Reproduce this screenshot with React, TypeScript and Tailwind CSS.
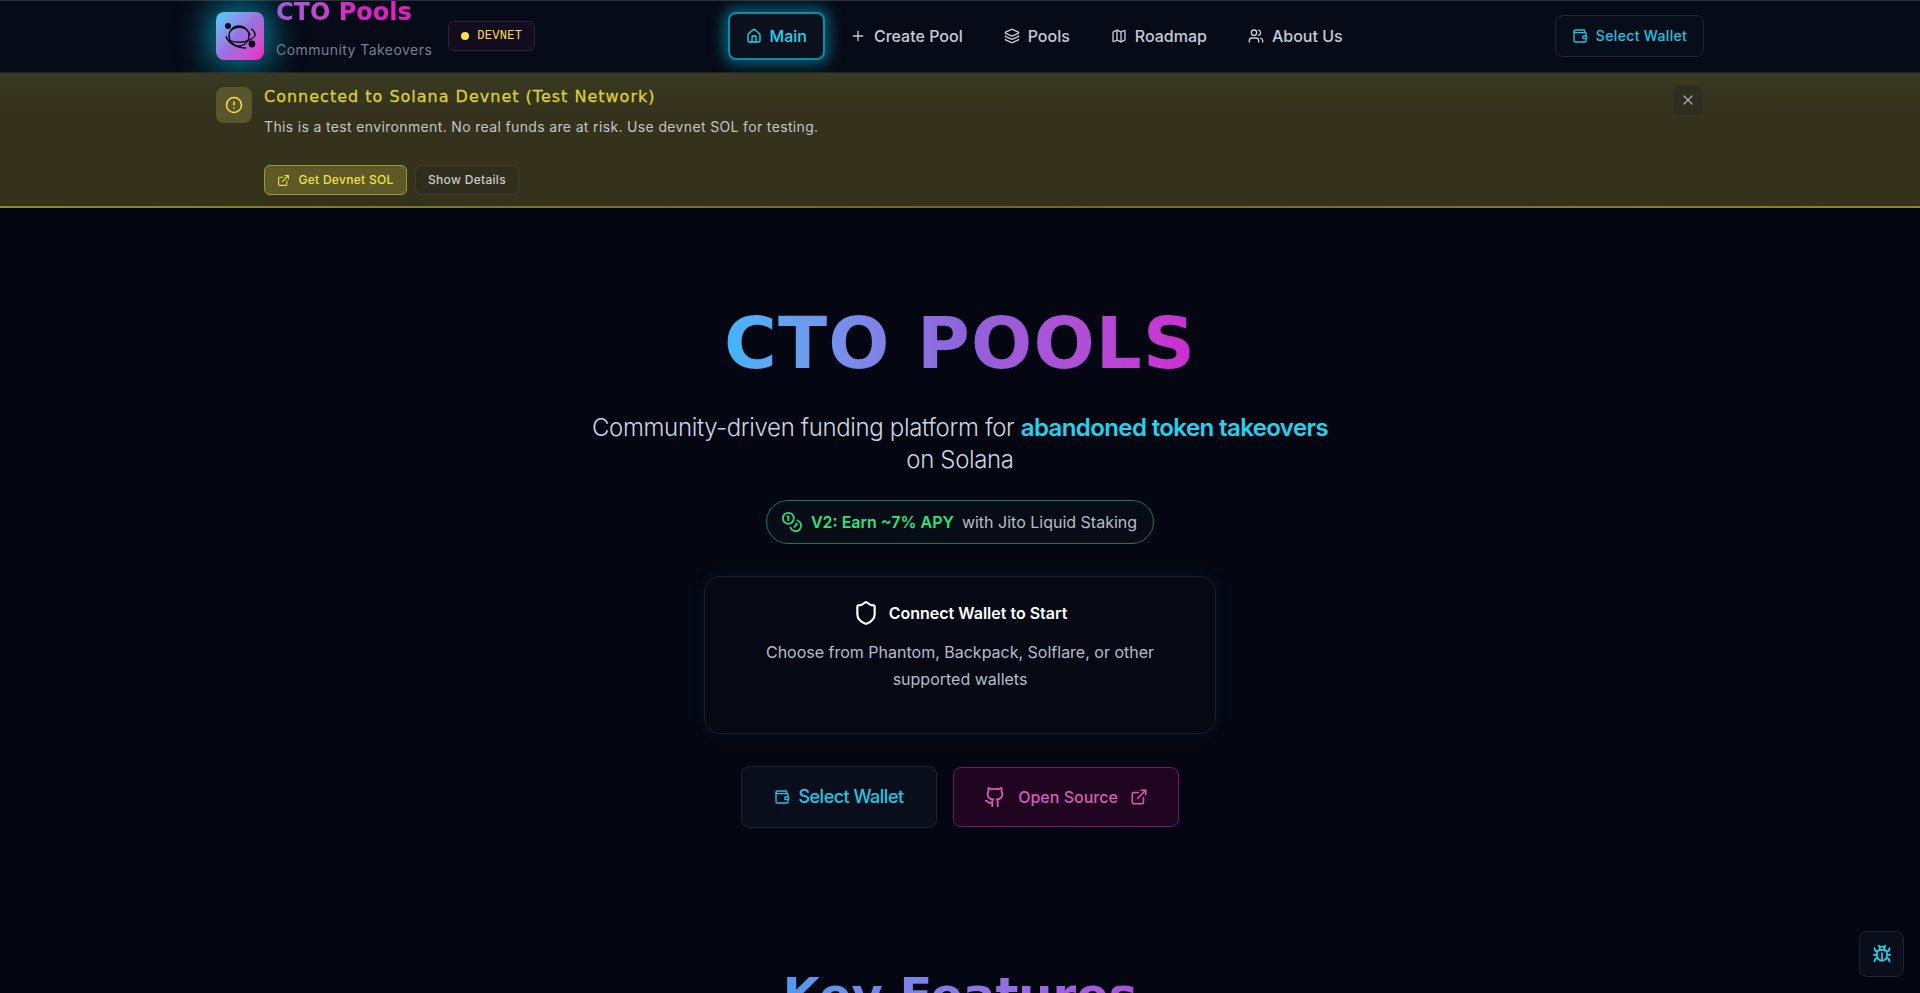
import { House, Plus, Layers, Map, Users, Wallet, CircleAlert, ExternalLink, X, Coins, Shield, Github, Bug } from "lucide-react";

const sans = "font-['Inter',sans-serif]";
const display = "font-['DejaVu_Sans',sans-serif]";

function NavItem({ icon, label }: { icon: React.ReactNode; label: string }) {
  return (
    <button className="flex h-12 items-center gap-2 rounded-lg px-4 text-base font-medium text-[#c4ccd8]">
      {icon}
      {label}
    </button>
  );
}

function Logo() {
  return (
    <div className="flex h-12 w-12 items-center justify-center rounded-lg bg-gradient-to-br from-[#2fd0fb] via-[#9a6fe0] to-[#f00fc8] shadow-[0_0_30px_8px_rgba(6,182,212,0.6)]">
      <svg width="34" height="30" viewBox="0 0 34 30" fill="none" stroke="#0b0b16" strokeWidth="1.4">
        <circle cx="5" cy="5" r="3" fill="#0b0b16" stroke="none" />
        <circle cx="29" cy="23" r="3.4" fill="#0b0b16" stroke="none" />
        <circle cx="16" cy="15" r="10" />
        <path d="M3 15c2 7 10 12 20 12" />
        <path d="M6 19c5 3 17 4 25-3 2-2 1-6-3-8" />
        <path d="M8 9c6-5 17-3 19 5" />
      </svg>
    </div>
  );
}

export default function App() {
  return (
    <div className={`${sans} flex h-screen flex-col overflow-hidden bg-[#040612] text-[#cbd5e1]`}>
      <header className="h-[73px] shrink-0 border-t border-b border-t-[#2b303c] border-b-[#1c2026] bg-[#070b18]">
        <div className="mx-auto flex h-[70px] w-[1488px] items-center justify-between">
          <div className="flex items-center gap-3">
            <Logo />
            <div className="flex flex-col pb-4">
              <span className={`${display} bg-gradient-to-r from-[#9b5fd8] via-[#dc22c4] to-[#e81cc0] bg-clip-text text-[24px] leading-8 font-bold text-transparent`}>
                CTO Pools
              </span>
              <span className="mt-3 text-sm leading-5 tracking-[0.45px] text-[#748094]">Community Takeovers</span>
            </div>
            <div className="ml-1 flex h-[30px] w-[87px] items-center justify-center gap-2 rounded-md border border-[#262a36] bg-[#120c1e]">
              <span className="h-2 w-2 rounded-full bg-[#fde047]" />
              <span className="font-['Liberation_Mono',monospace] text-xs tracking-[0.3px] text-[#fde047]">DEVNET</span>
            </div>
          </div>
          <nav className="mr-1 flex items-center gap-[9px]">
            <button className="flex h-12 items-center gap-2 rounded-lg border-2 border-[#0b8ca8] bg-[#0a101c] px-4 text-base font-medium text-[#22d3ee] shadow-[0_0_14px_4px_rgba(6,182,212,0.5)]">
              <House size={16} />
              Main
            </button>
            <NavItem icon={<Plus size={16} />} label="Create Pool" />
            <NavItem icon={<Layers size={16} />} label="Pools" />
            <NavItem icon={<Map size={16} />} label="Roadmap" />
            <NavItem icon={<Users size={16} />} label="About Us" />
          </nav>
          <button className="flex h-[42px] w-[149px] items-center justify-center gap-2 rounded-lg border border-[#212631] bg-[#080d1a] text-sm font-medium tracking-[0.35px] text-[#25c0e0]">
            <Wallet size={16} />
            Select Wallet
          </button>
        </div>
      </header>

      <section className="relative h-[135px] shrink-0 bg-gradient-to-b from-[#393a22] via-[#34321c] via-30% to-[#34321b]">
        <div className="mx-auto flex w-[1488px] items-start justify-between pt-3.5">
          <div className="flex items-start gap-3">
            <div className="flex h-9 w-9 items-center justify-center rounded-lg bg-[#57562c] text-[#fde047]">
              <CircleAlert size={18} />
            </div>
            <div>
              <div className={`${display} text-base leading-5 font-normal tracking-[1px] text-[#dccf3e] [-webkit-text-stroke:0.3px_#dccf3e]`}>Connected to Solana Devnet (Test Network)</div>
              <p className="mt-2.5 text-sm leading-5 tracking-[0.35px] text-[#c3c5c4]">
                This is a test environment. No real funds are at risk. Use devnet SOL for testing.
              </p>
              <div className="mt-[28px] flex items-center gap-2">
                <button className="flex h-[30px] w-[143px] items-center justify-center gap-2 rounded-md border border-[#a09833] bg-[#5d5a27] text-xs font-medium tracking-[0.3px] text-[#f2e04a]">
                  <ExternalLink size={13} />
                  Get Devnet SOL
                </button>
                <button className="flex h-[30px] w-[104px] items-center justify-center rounded-md border border-[#3f3e26] bg-[#2f2e1c] text-xs font-medium tracking-[0.3px] text-[#c8cacb]">
                  Show Details
                </button>
              </div>
            </div>
          </div>
          <button className="-mt-0.5 mr-px flex h-[30px] w-[30px] items-center justify-center rounded-lg bg-[#2d2d20] text-[#a5a8ad]">
            <X size={16} />
          </button>
        </div>
        <div className="absolute bottom-0 left-0 h-0.5 w-full bg-gradient-to-r from-[#8f8827] via-[#6b6828] to-[#8a8532]" />
      </section>

      <main className="flex flex-col items-center pt-[99px]">
        <h1 className={`${display} bg-gradient-to-r from-[#3fb6f7] via-[#8f63dc] to-[#cd2bd0] bg-clip-text text-[72px] leading-[72px] font-bold tracking-[1.2px] text-transparent`}>
          CTO POOLS
        </h1>
        <p className="mt-[33px] max-w-[768px] text-center text-2xl leading-8 font-light tracking-[-0.36px] text-[#cbd5e1]">
          Community-driven funding platform for <span className="font-semibold tracking-[-0.6px] text-[#22d3ee]">abandoned token takeovers</span> on Solana
        </p>
        <div className="mt-6 flex h-11 w-[388px] items-center justify-center gap-2 rounded-full border border-[#167a58] bg-[#070c16] pr-0.5">
          <Coins size={22} className="text-[#2dd881]" />
          <span className="text-base font-semibold text-[#2ee27f]">V2: Earn ~7% APY</span>
          <span className="text-base text-[#b6bec9]">with Jito Liquid Staking</span>
        </div>
        <div className="mt-8 w-[512px] rounded-2xl border border-[#1a2029] bg-[#060914] p-6 text-center shadow-[0_0_14px_rgba(8,145,178,0.1)]">
          <div className="flex h-6 items-center justify-center gap-2.5 text-base leading-6 font-semibold text-white">
            <Shield size={26} />
            Connect Wallet to Start
          </div>
          <p className="mx-auto mt-[14px] mb-4 w-[420px] text-base leading-[27px] text-[#b6bec9]">
            Choose from Phantom, Backpack, Solflare, or other supported wallets
          </p>
        </div>
        <div className="mt-8 flex items-center gap-4">
          <button className="flex h-[62px] w-[196px] items-center justify-center gap-2 rounded-lg border border-[#1f2530] bg-[#0a0e1a] text-lg font-medium tracking-[-0.5px] text-[#22c5e5]">
            <Wallet size={16} />
            Select Wallet
          </button>
          <button className="flex h-[60px] w-[226px] items-center justify-center gap-3 rounded-lg border border-[#6f1c60] bg-[#1f0520] text-base font-medium text-[#d95db5]">
            <Github size={22} />
            Open Source
            <ExternalLink size={18} />
          </button>
        </div>
        <h2 className={`${display} mt-[143px] bg-gradient-to-r from-[#4d9bf0] to-[#a94fd8] bg-clip-text text-[48px] leading-[48px] font-bold text-transparent`}>
          Key Features
        </h2>
      </main>

      <button className="fixed top-[931px] right-4 flex h-[46px] w-[45px] items-center justify-center rounded-lg border border-[#1f2530] bg-[#0a0e1a] text-[#22d3ee]">
        <Bug size={20} />
      </button>
    </div>
  );
}
